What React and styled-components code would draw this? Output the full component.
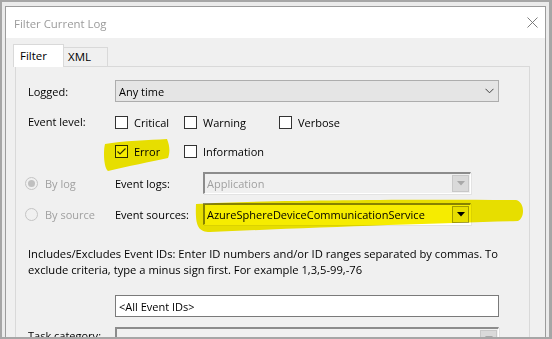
import React from 'react'
import styled, { createGlobalStyle } from 'styled-components'

const GlobalStyle = createGlobalStyle`
  html, body {
    margin: 0;
    padding: 0;
    width: 552px;
    height: 339px;
    overflow: hidden;
  }
  body {
    font-family: 'Open Sans', 'Noto Sans', sans-serif;
    font-size: 11px;
    color: #000;
  }
  * {
    box-sizing: border-box;
  }
`

const Screen = styled.div`
  width: 552px;
  height: 339px;
  background: #ebebeb;
  border-style: solid;
  border-color: #a6a6a6;
  border-width: 2px 3px 2px 2px;
  padding: 4px 3px 0 3px;
  display: flex;
`
const Window = styled.div`
  flex: 1;
  display: flex;
  flex-direction: column;
  background: #f0f0f0;
  border: 1px solid #9c9c9c;
  border-bottom: none;
  overflow: hidden;
`
const TitleBar = styled.div`
  height: 31px;
  flex: none;
  background: #fff;
  display: flex;
  align-items: center;
  justify-content: space-between;
  padding: 0 7px 0 8px;
`
const Title = styled.div`
  font-size: 11.4px;
  color: #9b9b9b;
  margin-top: 1px;
`
const Body = styled.div`
  flex: 1;
  display: flex;
  flex-direction: column;
  padding: 6px 15px 0 7px;
  min-height: 0;
`
const TabStrip = styled.div`
  display: flex;
  align-items: flex-end;
  height: 22px;
  flex: none;
`
const Tab = styled.div`
  position: relative;
  z-index: 1;
  height: ${p => (p.active ? '23px' : '19px')};
  margin-bottom: ${p => (p.active ? '-1px' : '0')};
  padding: ${p => (p.active ? '2px 0 0 6px' : '0 0 0 4px')};
  width: ${p => p.w}px;
  background: ${p => (p.active ? '#fff' : '#f0f0f0')};
  border: 1px solid #d9d9d9;
  border-bottom: none;
  border-left: ${p => (p.active ? '1px solid #d9d9d9' : 'none')};
  font-size: 11.5px;
  line-height: 17px;
`
const Panel = styled.div`
  position: relative;
  flex: 1;
  margin-left: 2px;
  background: #f0f0f0;
  border: 1px solid #d9d9d9;
  border-bottom: none;
  padding-top: 13px;
  display: flex;
  flex-direction: column;
`
const Row = styled.div`
  display: grid;
  grid-template-columns: ${p => p.cols || '99px auto'};
  align-items: ${p => p.align || 'center'};
  margin-top: ${p => p.mt || 0}px;
  height: ${p => p.h || 22}px;
`
const Label = styled.div`
  padding-left: ${p => (p.indent === undefined ? 12 : p.indent)}px;
  color: ${p => (p.disabled ? '#a0a0a0' : '#000')};
  white-space: nowrap;
  line-height: 15px;
  margin-top: ${p => p.dy || 0}px;
`
const ComboBox = styled.div`
  width: ${p => p.w}px;
  height: 22px;
  background: #e5e5e5;
  border: 1px solid #adadad;
  display: flex;
  align-items: center;
  justify-content: space-between;
  padding: 0 4px 0 3px;
`
const ClassicCombo = styled.div`
  width: ${p => p.w}px;
  height: 22px;
  background: ${p => (p.disabled ? '#f0f0f0' : '#fff')};
  border-style: solid;
  border-width: 2px 1px 1px 2px;
  border-color: #8c8c8c #fff #fff #8c8c8c;
  box-shadow: 1px 1px 0 #e3e3e3;
  display: flex;
  align-items: center;
  justify-content: space-between;
  padding: 0 1px 0 2px;
  color: ${p => (p.disabled ? '#a0a0a0' : '#000')};
`
const DropButton = styled.div`
  width: 17px;
  height: 17px;
  background: ${p => (p.disabled ? '#dadada' : '#f0f0f0')};
  border: 1px solid ${p => (p.disabled ? '#c8c8c8' : '#a8a8a8')};
  display: flex;
  align-items: center;
  justify-content: center;
`
const CheckGrid = styled.div`
  display: grid;
  grid-template-columns: 69px 95px auto;
  grid-auto-rows: 17px;
  row-gap: 12px;
`
const CheckItem = styled.div`
  display: flex;
  align-items: center;
  gap: 6px;
`
const Box = styled.div`
  width: 13px;
  height: 13px;
  border: 1px solid #333;
  background: #fff;
  display: flex;
  align-items: center;
  justify-content: center;
`
const RadioItem = styled.div`
  display: flex;
  align-items: center;
  gap: 7px;
  padding-left: 9px;
  color: #a0a0a0;
`
const Radio = styled.div`
  width: 13px;
  height: 13px;
  border-radius: 50%;
  border: 1px solid #c4c4c4;
  background: #f0f0f0;
  display: flex;
  align-items: center;
  justify-content: center;
  &::after {
    content: '';
    display: ${p => (p.checked ? 'block' : 'none')};
    width: 7px;
    height: 7px;
    border-radius: 50%;
    background: #c0c0c0;
  }
`
const Description = styled.div`
  margin-top: 21px;
  padding-left: 12px;
  line-height: 16px;
  width: 505px;
  font-size: 11.2px;
`
const TextInput = styled.div`
  width: 384px;
  height: 22px;
  background: #fff;
  border: 1px solid #7a7a7a;
  display: flex;
  align-items: center;
  padding-left: 3px;
`
const Highlight = styled.svg`
  position: absolute;
  left: 0;
  top: 0;
  mix-blend-mode: multiply;
  pointer-events: none;
`

const Chevron = () => (
  <svg width="9" height="6" viewBox="0 0 9 6">
    <polyline points="0.5,0.8 4.5,4.8 8.5,0.8" fill="none" stroke="#404040" strokeWidth="1" />
  </svg>
)

const Arrow = ({ color }) => (
  <svg width="8" height="5" viewBox="0 0 8 5">
    <polygon points="0,0 8,0 4,4.5" fill={color} />
  </svg>
)

const Check = ({ label, checked }) => (
  <CheckItem>
    <Box>
      {checked && (
        <svg width="11" height="11" viewBox="0 0 11 11">
          <polyline points="1.5,5.5 4,8 9.5,2.5" fill="none" stroke="#333" strokeWidth="1.2" />
        </svg>
      )}
    </Box>
    <span>{label}</span>
  </CheckItem>
)

function App() {
  return (
    <Screen>
      <GlobalStyle />
      <Window>
        <TitleBar>
          <Title>Filter Current Log</Title>
          <svg width="11" height="11" viewBox="0 0 11 11">
            <path d="M0.5,0.5 L10.5,10.5 M10.5,0.5 L0.5,10.5" stroke="#6e6e6e" strokeWidth="0.9" />
          </svg>
        </TitleBar>
        <Body>
          <TabStrip>
            <Tab active w={51}>Filter</Tab>
            <Tab w={44}>XML</Tab>
          </TabStrip>
          <Panel>
            <Row>
              <Label>Logged:</Label>
              <ComboBox w={384}>
                <span>Any time</span>
                <Chevron />
              </ComboBox>
            </Row>
            <Row mt={12} h={46} align="start">
              <Label>Event level:</Label>
              <CheckGrid>
                <Check label="Critical" />
                <Check label="Warning" />
                <Check label="Verbose" />
                <Check label="Error" checked />
                <Check label="Information" />
              </CheckGrid>
            </Row>
            <Row mt={12} cols="99px 88px auto">
              <RadioItem>
                <Radio checked />
                <span>By log</span>
              </RadioItem>
              <Label indent={0}>Event logs:</Label>
              <ClassicCombo w={268} disabled>
                <span>Application</span>
                <DropButton disabled>
                  <Arrow color="#a8a8a8" />
                </DropButton>
              </ClassicCombo>
            </Row>
            <Row mt={9} cols="99px 88px auto">
              <RadioItem>
                <Radio />
                <span>By source</span>
              </RadioItem>
              <Label indent={0}>Event sources:</Label>
              <ClassicCombo w={268}>
                <span>AzureSphereDeviceCommunicationService</span>
                <DropButton>
                  <Arrow color="#000" />
                </DropButton>
              </ClassicCombo>
            </Row>
            <Description>
              Includes/Excludes Event IDs: Enter ID numbers and/or ID ranges separated by commas. To
              exclude criteria, type a minus sign first. For example 1,3,5-99,-76
            </Description>
            <Row mt={17}>
              <span />
              <TextInput>&lt;All Event IDs&gt;</TextInput>
            </Row>
            <Row mt={10} align="start">
              <Label dy={1}>Task category:</Label>
              <ClassicCombo w={384} disabled>
                <span />
                <DropButton disabled>
                  <Arrow color="#a8a8a8" />
                </DropButton>
              </ClassicCombo>
            </Row>
            <Highlight width="520" height="270" viewBox="16 67 520 270">
              <path
                d="M105,144 C122,141 150,140 167,139 C170,146 170,153 168,158 C150,162 128,166 108,171 C104,168 103,152 105,144 Z"
                fill="#f6ec00"
              />
              <path
                d="M196,204 C260,200 420,199 516,200 C525,202 525,218 518,221 C440,223 300,228 210,232 C198,232 195,226 196,204 Z"
                fill="#f6ec00"
              />
            </Highlight>
          </Panel>
        </Body>
      </Window>
    </Screen>
  )
}

export default App
